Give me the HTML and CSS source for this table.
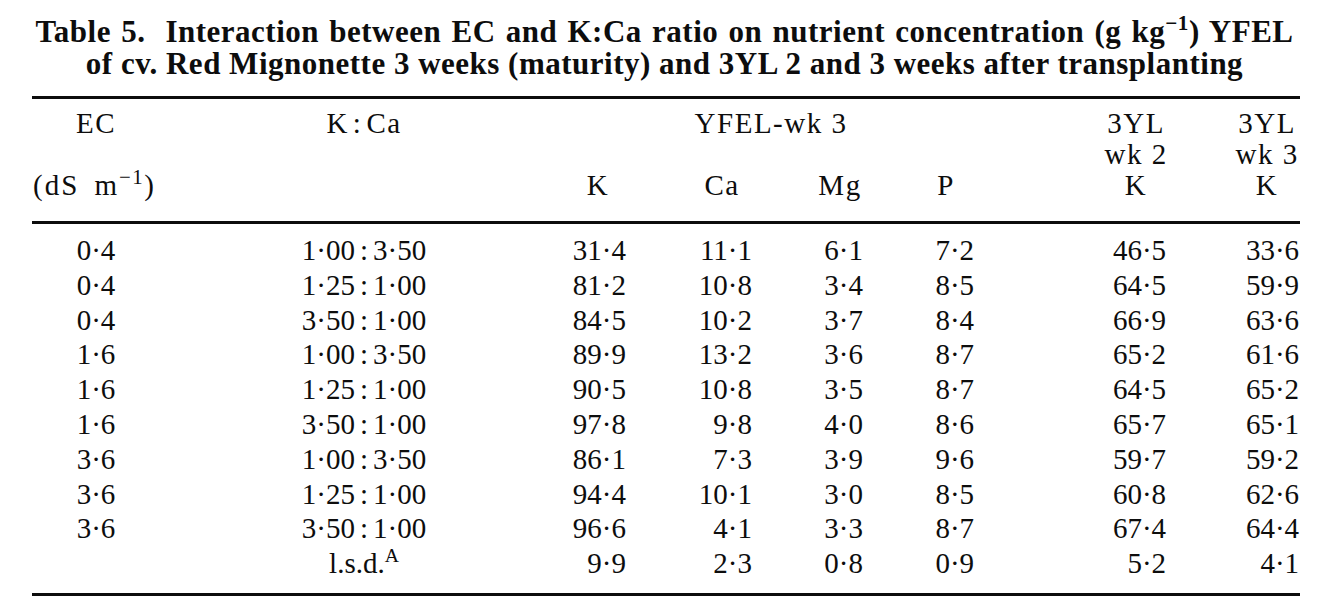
FILE: index.html
```html
<!DOCTYPE html>
<html lang="en">
<head>
<meta charset="utf-8">
<title>Table 5</title>
<link rel="stylesheet" href="styles.css">
</head>
<body>
<div class="page">
  <div class="caption">
    <div class="cap-line first-line">Table 5.<span class="gap"></span>Interaction between EC and K:Ca ratio on nutrient concentration (g kg<sup>−1</sup>) YFEL</div>
    <div class="cap-line">of cv. Red Mignonette 3 weeks (maturity) and 3YL 2 and 3 weeks after transplanting</div>
  </div>
  <table class="data">
    <colgroup>
      <col class="c1"><col class="c2"><col class="c3"><col class="c4"><col class="c5"><col class="c6"><col class="c7"><col class="c8">
    </colgroup>
    <thead>
      <tr class="hr1">
        <th class="ctr">EC</th>
        <th class="ctr">K<span class="col">:</span>Ca</th>
        <th class="ctr" colspan="4">YFEL-wk 3</th>
        <th class="num"><span class="h w60">3YL</span></th>
        <th class="num last"><span class="h w64">3YL</span></th>
      </tr>
      <tr class="hr2">
        <th></th><th></th><th></th><th></th><th></th><th></th>
        <th class="num"><span class="h w60">wk 2</span></th>
        <th class="num last"><span class="h w64">wk 3</span></th>
      </tr>
      <tr class="hr3">
        <th class="left"><span class="units">(dS m<sup>−1</sup>)</span></th>
        <th></th>
        <th class="num"><span class="h w60">K</span></th>
        <th class="num"><span class="h w60">Ca</span></th>
        <th class="num"><span class="h w46">Mg</span></th>
        <th class="num"><span class="h w56">P</span></th>
        <th class="num"><span class="h w60">K</span></th>
        <th class="num last"><span class="h w64">K</span></th>
      </tr>
    </thead>
    <tbody>
      <tr class="first"><td class="ctr">0·4</td><td class="ctr">1·00<span class="col">:</span>3·50</td><td class="num">31·4</td><td class="num">11·1</td><td class="num">6·1</td><td class="num">7·2</td><td class="num">46·5</td><td class="num last">33·6</td></tr>
      <tr><td class="ctr">0·4</td><td class="ctr">1·25<span class="col">:</span>1·00</td><td class="num">81·2</td><td class="num">10·8</td><td class="num">3·4</td><td class="num">8·5</td><td class="num">64·5</td><td class="num last">59·9</td></tr>
      <tr><td class="ctr">0·4</td><td class="ctr">3·50<span class="col">:</span>1·00</td><td class="num">84·5</td><td class="num">10·2</td><td class="num">3·7</td><td class="num">8·4</td><td class="num">66·9</td><td class="num last">63·6</td></tr>
      <tr><td class="ctr">1·6</td><td class="ctr">1·00<span class="col">:</span>3·50</td><td class="num">89·9</td><td class="num">13·2</td><td class="num">3·6</td><td class="num">8·7</td><td class="num">65·2</td><td class="num last">61·6</td></tr>
      <tr><td class="ctr">1·6</td><td class="ctr">1·25<span class="col">:</span>1·00</td><td class="num">90·5</td><td class="num">10·8</td><td class="num">3·5</td><td class="num">8·7</td><td class="num">64·5</td><td class="num last">65·2</td></tr>
      <tr><td class="ctr">1·6</td><td class="ctr">3·50<span class="col">:</span>1·00</td><td class="num">97·8</td><td class="num">9·8</td><td class="num">4·0</td><td class="num">8·6</td><td class="num">65·7</td><td class="num last">65·1</td></tr>
      <tr><td class="ctr">3·6</td><td class="ctr">1·00<span class="col">:</span>3·50</td><td class="num">86·1</td><td class="num">7·3</td><td class="num">3·9</td><td class="num">9·6</td><td class="num">59·7</td><td class="num last">59·2</td></tr>
      <tr><td class="ctr">3·6</td><td class="ctr">1·25<span class="col">:</span>1·00</td><td class="num">94·4</td><td class="num">10·1</td><td class="num">3·0</td><td class="num">8·5</td><td class="num">60·8</td><td class="num last">62·6</td></tr>
      <tr><td class="ctr">3·6</td><td class="ctr">3·50<span class="col">:</span>1·00</td><td class="num">96·6</td><td class="num">4·1</td><td class="num">3·3</td><td class="num">8·7</td><td class="num">67·4</td><td class="num last">64·4</td></tr>
      <tr class="lsd"><td></td><td class="ctr">l.s.d.<sup>A</sup></td><td class="num">9·9</td><td class="num">2·3</td><td class="num">0·8</td><td class="num">0·9</td><td class="num">5·2</td><td class="num last">4·1</td></tr>
    </tbody>
  </table>
</div>
</body>
</html>
```

FILE: styles.css
```css
html, body {
  margin: 0;
  padding: 0;
  background: #ffffff;
}

body {
  color: #0d0d0d;
  font-family: "Liberation Serif", "Times New Roman", serif;
}

.page {
  width: 1329px;
  height: 611px;
  overflow: hidden;
}

.caption {
  padding-top: 16px;
  margin-bottom: 16px;
  font-weight: bold;
  font-size: 31px;
  line-height: 32px;
  text-align: center;
  letter-spacing: 0.5px;
}

.cap-line {
  white-space: nowrap;
}

.first-line {
  word-spacing: 2px;
}

.caption .gap {
  display: inline-block;
  width: 20px;
}

sup {
  font-size: 0.68em;
  line-height: 0;
  vertical-align: 0;
  position: relative;
  top: -0.55em;
}

.data {
  margin-left: 32px;
  width: 1268px;
  table-layout: fixed;
  border-collapse: separate;
  border-spacing: 0;
  border-top: 3px solid #0d0d0d;
  border-bottom: 3px solid #0d0d0d;
  font-size: 29px;
}

.c1 { width: 128px; }
.c2 { width: 408px; }
.c3 { width: 58px; }
.c4 { width: 126px; }
.c5 { width: 111px; }
.c6 { width: 111px; }
.c7 { width: 192px; }
.c8 { width: 134px; }

th, td {
  padding: 0;
  font-weight: normal;
  white-space: nowrap;
}

thead th {
  letter-spacing: 1.5px;
}

thead tr {
  height: 31px;
  line-height: 31px;
}

.hr1 th { padding-top: 9px; }
.hr3 th {
  padding-bottom: 20px;
  border-bottom: 3px solid #0d0d0d;
}

tbody tr {
  height: 34.8px;
  line-height: 34.8px;
}

tbody tr.first td { padding-top: 9px; }
tbody tr.lsd td { padding-bottom: 12px; }

.ctr { text-align: center; }
.left { text-align: left; }
.num { text-align: right; }
.last { padding-right: 1px; }

.h {
  display: inline-flex;
  justify-content: center;
  white-space: nowrap;
}

.w46 { width: 46px; }
.w56 { width: 56px; }
.w60 { width: 60px; }
.w64 { width: 64px; }

.col {
  margin: 0 4px;
}

tbody .col {
  margin: 0 5px;
}

.units {
  padding-left: 1px;
  letter-spacing: 2px;
  word-spacing: 6px;
}

.units sup {
  font-size: 0.72em;
  letter-spacing: 1.5px;
}
```
